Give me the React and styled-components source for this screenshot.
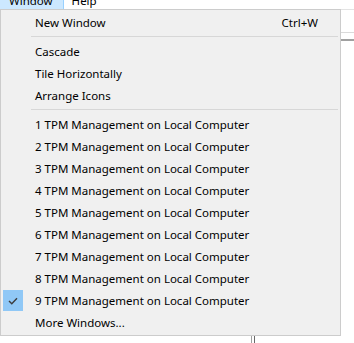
import styled, { createGlobalStyle } from "styled-components";

const GlobalStyle = createGlobalStyle`
  html, body {
    margin: 0;
    padding: 0;
    background: #ffffff;
    overflow: hidden;
  }
  body {
    font-family: "Noto Sans", "Segoe UI", sans-serif;
    font-size: 11.5px;
    color: #000000;
  }
`;

const Page = styled.div`
  width: 354px;
  height: 343px;
  display: flex;
  flex-direction: column;
  overflow: hidden;
`;

const MenuBar = styled.div`
  height: 9px;
  display: flex;
  align-items: flex-end;
  overflow: hidden;
  background: #ffffff;
`;

const BarItem = styled.div`
  height: 17px;
  line-height: 17px;
  padding: 0 ${(p) => (p.$open ? 10 : 7)}px 0 ${(p) => (p.$open ? 9 : 8)}px;
  box-sizing: border-box;
  background: ${(p) => (p.$open ? "#cce8ff" : "transparent")};
  border-right: 1px solid ${(p) => (p.$open ? "#99d1ff" : "transparent")};
`;

const Middle = styled.div`
  display: flex;
`;

const Menu = styled.div`
  width: 341px;
  box-sizing: border-box;
  border: 1px solid #cccccc;
  background: #f0f0f0;
  padding: 1px 2px 2px 2px;
  display: flex;
  flex-direction: column;
`;

const Item = styled.div`
  position: relative;
  height: 22px;
  display: flex;
  align-items: center;
  padding: 0 20px 0 32px;
  white-space: nowrap;
`;

const Label = styled.span`
  flex: 1;
`;

const Shortcut = styled.span``;

const Check = styled.span`
  position: absolute;
  left: 0;
  top: 1px;
  width: 20px;
  height: 21px;
  background: #90c8f6;
  display: flex;
  align-items: center;
  justify-content: center;
`;

const Separator = styled.div`
  height: 7px;
  display: flex;
  align-items: center;
  padding-left: 28px;
  &::after {
    content: "";
    flex: 1;
    height: 1px;
    background: #d7d7d7;
  }
`;

const SidePane = styled.div`
  flex: 1;
  display: flex;
  flex-direction: column;
`;

const SideLine = styled.div`
  height: ${(p) => p.$h || 1}px;
  background: ${(p) => p.$c};
  margin-top: ${(p) => p.$gap || 0}px;
`;

const Bottom = styled.div`
  flex: 1;
  display: flex;
  padding-left: 251px;
  gap: 2px;
`;

const VLine = styled.div`
  width: 1px;
  background: ${(p) => p.$c};
`;

const CheckMark = () => (
  <svg width="10" height="8" viewBox="0 0 10 8">
    <path d="M1 4 L3.8 6.8 L9 1.3" fill="none" stroke="#3c3c3c" strokeWidth="1.4" />
  </svg>
);

const windows = [1, 2, 3, 4, 5, 6, 7, 8, 9];

export default function App() {
  return (
    <Page>
      <GlobalStyle />
      <MenuBar>
        <BarItem $open>Window</BarItem>
        <BarItem>Help</BarItem>
      </MenuBar>
      <Middle>
        <Menu>
          <Item>
            <Label>New Window</Label>
            <Shortcut>Ctrl+W</Shortcut>
          </Item>
          <Separator />
          <Item>
            <Label>Cascade</Label>
          </Item>
          <Item>
            <Label>Tile Horizontally</Label>
          </Item>
          <Item>
            <Label>Arrange Icons</Label>
          </Item>
          <Separator />
          {windows.map((n) => (
            <Item key={n}>
              {n === 9 && (
                <Check>
                  <CheckMark />
                </Check>
              )}
              <Label>{n} TPM Management on Local Computer</Label>
            </Item>
          ))}
          <Item>
            <Label>More Windows...</Label>
          </Item>
        </Menu>
        <SidePane>
          <SideLine $c="#e3e3e3" />
          <SideLine $c="#dadada" $gap={22} />
          <SideLine $c="#a0a0a0" $h={2} $gap={6} />
        </SidePane>
      </Middle>
      <Bottom>
        <VLine $c="#a0a0a0" />
        <VLine $c="#696969" />
      </Bottom>
    </Page>
  );
}
